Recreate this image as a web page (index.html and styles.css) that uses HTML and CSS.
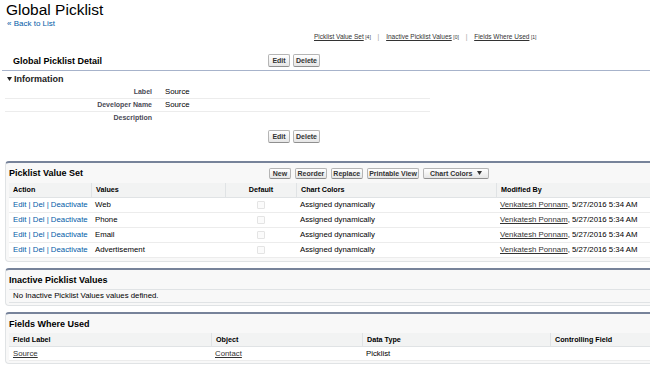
FILE: index.html
```html
<!DOCTYPE html>
<html lang="en">
<head>
<meta charset="utf-8">
<title>Global Picklist</title>
<link rel="stylesheet" href="styles.css">
</head>
<body>
<div class="page">
  <h1 class="title">Global Picklist</h1>
  <div class="back"><a href="#">« Back to List</a></div>
  <div class="quicklinks">
    <a href="#">Picklist Value Set</a><span class="count">[4]</span>
    <span class="pipe">|</span>
    <a href="#">Inactive Picklist Values</a><span class="count">[0]</span>
    <span class="pipe">|</span>
    <a href="#">Fields Where Used</a><span class="count">[1]</span>
  </div>

  <section class="detail">
    <div class="detail-head">
      <h2 class="pb-title detail-title">Global Picklist Detail</h2>
      <div class="btns"><button class="btn">Edit</button><button class="btn">Delete</button></div>
    </div>
    <h3 class="sub-head"><svg class="twist" width="5" height="4" viewBox="0 0 5 4"><polygon points="0,0 5,0 2.5,4" fill="#222"/></svg>Information</h3>
    <div class="fields">
      <div class="frow"><span class="flabel">Label</span><span class="fval">Source</span></div>
      <div class="frow"><span class="flabel">Developer Name</span><span class="fval">Source</span></div>
      <div class="frow"><span class="flabel">Description</span><span class="fval"></span></div>
    </div>
    <div class="btns btns-bottom"><button class="btn">Edit</button><button class="btn">Delete</button></div>
  </section>

  <section class="rl rl-first">
    <div class="rl-head rl-head-tall">
      <h2 class="pb-title list-title">Picklist Value Set</h2>
      <div class="btns list-btns">
        <button class="btn">New</button>
        <button class="btn">Reorder</button>
        <button class="btn">Replace</button>
        <button class="btn">Printable View</button>
        <button class="btn btn-menu">Chart Colors<svg class="caret" width="5" height="4" viewBox="0 0 5 4"><polygon points="0,0 5,0 2.5,4" fill="#333"/></svg></button>
      </div>
    </div>
    <table class="list">
      <colgroup><col class="c-action"><col class="c-values"><col class="c-default"><col class="c-chart"><col></colgroup>
      <thead>
        <tr><th>Action</th><th>Values</th><th class="center">Default</th><th>Chart Colors</th><th>Modified By</th></tr>
      </thead>
      <tbody>
        <tr><td class="actions"><a class="act" href="#">Edit</a> | <a class="act" href="#">Del</a> | <a class="act" href="#">Deactivate</a></td><td>Web</td><td class="center"><span class="cb"></span></td><td>Assigned dynamically</td><td><a class="dlink" href="#">Venkatesh Ponnam</a>, 5/27/2016 5:34 AM</td></tr>
        <tr><td class="actions"><a class="act" href="#">Edit</a> | <a class="act" href="#">Del</a> | <a class="act" href="#">Deactivate</a></td><td>Phone</td><td class="center"><span class="cb"></span></td><td>Assigned dynamically</td><td><a class="dlink" href="#">Venkatesh Ponnam</a>, 5/27/2016 5:34 AM</td></tr>
        <tr><td class="actions"><a class="act" href="#">Edit</a> | <a class="act" href="#">Del</a> | <a class="act" href="#">Deactivate</a></td><td>Email</td><td class="center"><span class="cb"></span></td><td>Assigned dynamically</td><td><a class="dlink" href="#">Venkatesh Ponnam</a>, 5/27/2016 5:34 AM</td></tr>
        <tr><td class="actions"><a class="act" href="#">Edit</a> | <a class="act" href="#">Del</a> | <a class="act" href="#">Deactivate</a></td><td>Advertisement</td><td class="center"><span class="cb"></span></td><td>Assigned dynamically</td><td><a class="dlink" href="#">Venkatesh Ponnam</a>, 5/27/2016 5:34 AM</td></tr>
      </tbody>
    </table>
  </section>

  <section class="rl rl-inactive">
    <div class="rl-head">
      <h2 class="pb-title">Inactive Picklist Values</h2>
    </div>
    <div class="norows">No Inactive Picklist Values values defined.</div>
  </section>

  <section class="rl rl-fields">
    <div class="rl-head">
      <h2 class="pb-title">Fields Where Used</h2>
    </div>
    <table class="list list-compact">
      <colgroup><col class="c-flabel"><col class="c-object"><col class="c-dtype"><col></colgroup>
      <thead>
        <tr><th>Field Label</th><th>Object</th><th>Data Type</th><th>Controlling Field</th></tr>
      </thead>
      <tbody>
        <tr><td><a class="dlink" href="#">Source</a></td><td><a class="dlink" href="#">Contact</a></td><td>Picklist</td><td></td></tr>
      </tbody>
    </table>
  </section>
</div>
</body>
</html>
```

FILE: styles.css
```css
html, body {
  margin: 0;
  padding: 0;
  overflow: hidden;
  background: #fff;
}

body {
  font-family: "Liberation Sans", Arial, sans-serif;
  color: #000;
}

.page {
  padding-top: 1px;
}

.title {
  margin: 0 0 0 6px;
  font-size: 15.5px;
  line-height: 18px;
  font-weight: normal;
  color: #000;
}

.back {
  margin-left: 7px;
  font-size: 8px;
  line-height: 10px;
}

.back a {
  color: #015ba7;
  text-decoration: none;
}

.quicklinks {
  margin-top: 4px;
  padding-left: 314px;
  font-size: 6.5px;
  line-height: 8px;
  color: #999;
  white-space: nowrap;
}

.quicklinks a {
  color: #333;
  text-decoration: underline;
}

.quicklinks .count {
  font-size: 5px;
  margin-left: 1.5px;
  color: #333;
}

.quicklinks .pipe {
  margin: 0 5px;
}

/* buttons */
.btns {
  display: flex;
  align-items: center;
  gap: 3px;
}

.btn {
  box-sizing: border-box;
  height: 13px;
  min-width: 22px;
  padding: 0 2px;
  margin: 0;
  border: 1px solid #b5b5b5;
  border-bottom-color: #8f8f8f;
  border-radius: 2px;
  background: linear-gradient(#ffffff, #f0f0f0 60%, #e6e6e6);
  font-family: "Liberation Sans", Arial, sans-serif;
  font-size: 7px;
  font-weight: bold;
  line-height: 11px;
  color: #333;
  display: inline-flex;
  align-items: center;
  justify-content: center;
}

.list-btns {
  gap: 4px;
}

.list-btns .btn {
  height: 11px;
  line-height: 9px;
  padding: 0 1.5px;
}

.list-btns .btn-menu {
  padding: 0 6px 0 5.5px;
}

.caret {
  margin-left: 5px;
  display: block;
}

/* detail block */
.detail {
  margin: 10px 0 0 2px;
}

.detail-head {
  display: flex;
  align-items: center;
  height: 19px;
  padding-left: 11px;
  border-bottom: 1px solid #a7b3cb;
}

.pb-title {
  margin: 0;
  font-size: 9px;
  font-weight: bold;
  color: #000;
  white-space: nowrap;
}

.detail-title {
  width: 255px;
  flex: none;
}

.sub-head {
  margin: 0;
  height: 15px;
  display: flex;
  align-items: center;
  padding-left: 5px;
  font-size: 9px;
  font-weight: bold;
  color: #222;
}

.twist {
  display: block;
  margin-right: 2px;
}

.fields {
  margin-left: 3px;
  width: 425px;
}

.frow {
  display: grid;
  grid-template-columns: 147px 1fr;
  height: 12px;
  line-height: 12px;
  border-bottom: 1px solid #ececec;
}

.frow:last-child {
  border-bottom: none;
}

.flabel {
  text-align: right;
  font-size: 7px;
  font-weight: bold;
  color: #4a4a56;
}

.fval {
  padding-left: 13px;
  font-size: 7.8px;
  color: #000;
}

.btns-bottom {
  margin-top: 6px;
  padding-left: 266px;
}

/* related lists */
.rl {
  margin: 6px 0 0 5px;
  border: 1px solid #e0e3e5;
  border-right: none;
  border-top: 2px solid #77839a;
  border-radius: 4px 0 0 4px;
  background: #f8f8f8;
  padding: 0 0 2px 3px;
}

.rl-first {
  margin-top: 18px;
  padding-bottom: 3px;
}

.rl-fields {
  margin-top: 6px;
}

.rl-head {
  display: flex;
  align-items: center;
  height: 19px;
}

.rl-head-tall {
  height: 20px;
}

.list-title {
  width: 260px;
  flex: none;
}

.list {
  width: 100%;
  table-layout: fixed;
  border-collapse: separate;
  border-spacing: 0;
  font-size: 7.8px;
}

.c-action { width: 82px; }
.c-values { width: 134px; }
.c-default { width: 71px; }
.c-chart { width: 200px; }

.c-flabel { width: 202px; }
.c-object { width: 151px; }
.c-dtype { width: 188px; }

.list th {
  background: #f2f3f3;
  font-size: 7.2px;
  font-weight: bold;
  text-align: left;
  color: #000;
  line-height: 14px;
  padding: 0 4px;
  border-bottom: 1px solid #e0e3e5;
  white-space: nowrap;
}

.list th + th {
  border-left: 1px solid #e0e3e5;
}

.list td {
  background: #fff;
  line-height: 14px;
  padding: 0 4px;
  border-bottom: 1px solid #ececec;
  color: #000;
  white-space: nowrap;
}

.list-compact th,
.list-compact td {
  line-height: 13px;
}

.list .center {
  text-align: center;
}

.list .actions {
  color: #015ba7;
}

.act {
  color: #015ba7;
  text-decoration: none;
}

.dlink {
  color: #333;
  text-decoration: underline;
}

.cb {
  display: inline-block;
  box-sizing: border-box;
  width: 8px;
  height: 8px;
  border: 1px solid #e4e4e4;
  border-radius: 1px;
  background: #fbfbfb;
  vertical-align: middle;
}

.norows {
  line-height: 12px;
  padding-left: 4px;
  font-size: 7.8px;
  border-top: 1px solid #e0e3e5;
  border-bottom: 1px solid #e0e3e5;
  background: #f8f8f8;
  color: #000;
}
```
